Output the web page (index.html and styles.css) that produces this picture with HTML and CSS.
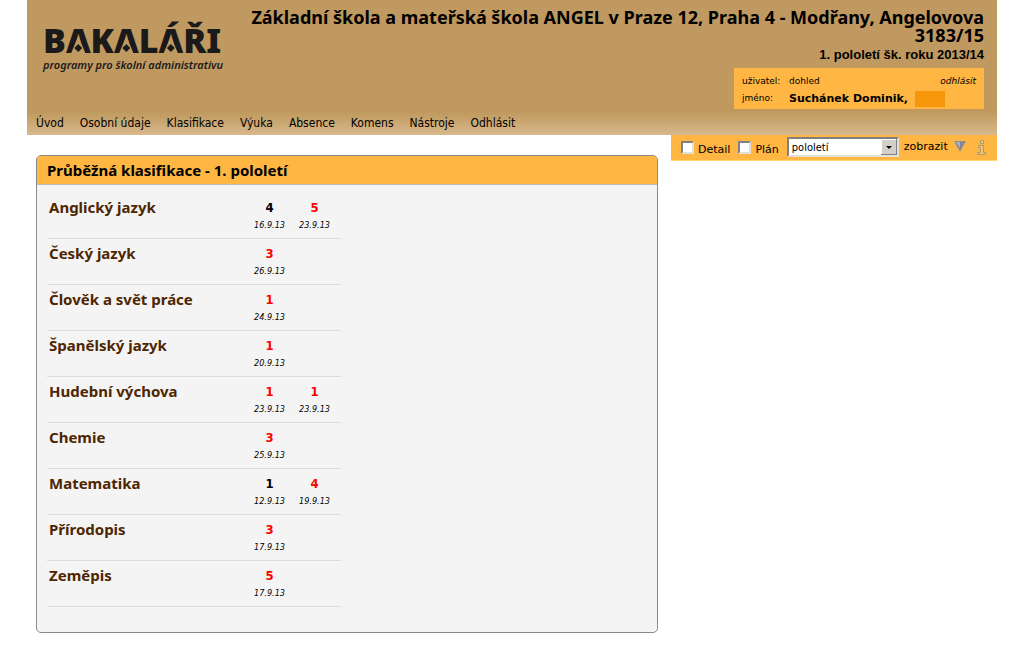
FILE: index.html
```html
<!DOCTYPE html>
<html lang="cs">
<head>
    <meta charset="UTF-8">
    <title>Bakaláři</title>
    <link rel="stylesheet" href="styles.css">
</head>
<body>
<div class="page">
    <header class="top">
        <div class="top-row">
            <div class="logo">
                <div class="logo-name">B<span>A</span>K<span>A</span>L<span>Á</span>ŘI</div>
                <div class="logo-sub">programy pro školní administrativu</div>
            </div>
            <div class="school">
                <h1>Základní škola a mateřská škola ANGEL v Praze 12, Praha 4 - Modřany, Angelovova 3183/15</h1>
                <p class="term">1. pololetí šk. roku 2013/14</p>
                <div class="user">
                    <span>uživatel:</span>
                    <span>dohled</span>
                    <a href="#" class="logout">odhlásit</a>
                    <span>jméno:</span>
                    <span class="user-name">Suchánek Dominik,<i class="mask"></i></span>
                </div>
            </div>
        </div>
        <nav class="menu">
            <a href="#">Úvod</a>
            <a href="#">Osobní údaje</a>
            <a href="#">Klasifikace</a>
            <a href="#">Výuka</a>
            <a href="#">Absence</a>
            <a href="#">Komens</a>
            <a href="#">Nástroje</a>
            <a href="#">Odhlásit</a>
        </nav>
    </header>

    <main class="content">
        <section class="panel">
            <h2>Průběžná klasifikace - 1. pololetí</h2>
            <table class="marks">
                <tr>
                    <th>Anglický jazyk</th>
                    <td><b>4</b><i>16.9.13</i></td>
                    <td class="new"><b>5</b><i>23.9.13</i></td>
                </tr>
                <tr>
                    <th>Český jazyk</th>
                    <td class="new"><b>3</b><i>26.9.13</i></td>
                    <td></td>
                </tr>
                <tr>
                    <th>Člověk a svět práce</th>
                    <td class="new"><b>1</b><i>24.9.13</i></td>
                    <td></td>
                </tr>
                <tr>
                    <th>Španělský jazyk</th>
                    <td class="new"><b>1</b><i>20.9.13</i></td>
                    <td></td>
                </tr>
                <tr>
                    <th>Hudební výchova</th>
                    <td class="new"><b>1</b><i>23.9.13</i></td>
                    <td class="new"><b>1</b><i>23.9.13</i></td>
                </tr>
                <tr>
                    <th>Chemie</th>
                    <td class="new"><b>3</b><i>25.9.13</i></td>
                    <td></td>
                </tr>
                <tr>
                    <th>Matematika</th>
                    <td><b>1</b><i>12.9.13</i></td>
                    <td class="new"><b>4</b><i>19.9.13</i></td>
                </tr>
                <tr>
                    <th>Přírodopis</th>
                    <td class="new"><b>3</b><i>17.9.13</i></td>
                    <td></td>
                </tr>
                <tr>
                    <th>Zeměpis</th>
                    <td class="new"><b>5</b><i>17.9.13</i></td>
                    <td></td>
                </tr>
            </table>
        </section>

        <form class="filter">
            <input type="checkbox" id="detail">
            <label for="detail">Detail</label>
            <input type="checkbox" id="plan">
            <label for="plan">Plán</label>
            <div class="select">
                <select aria-label="období">
                    <option>pololetí</option>
                </select>
                <svg width="16" height="16" viewBox="0 0 16 16">
                    <path d="M0 0h16v16H0z" fill="#808080"/>
                    <path d="M0 0h15v15H0z" fill="#fff"/>
                    <path d="M1 1h14v14H1z" fill="#d4d0c8"/>
                    <path d="M5 7h6l-3 3z" fill="#000"/>
                </svg>
            </div>
            <button type="button" class="show">zobrazit
                <svg width="12" height="10" viewBox="0 0 12 10">
                    <path d="M0 0h12L6.500 10h-1z" fill="#8c8c94"/>
                    <path d="M2 1h8L6 8z" fill="#7e879c"/>
                    <path d="M2 1h4v6z" fill="#a9b1c4"/>
                </svg>
            </button>
            <button type="button" class="info" aria-label="info">
                <svg width="10" height="15" viewBox="0 0 10 15">
                    <path d="M3.500 .5h3v3h-3zM1.500 5.500h5v7h2v2h-8v-2h3v-5h-2z" fill="#fcc662" stroke="#a39a78"/>
                </svg>
            </button>
        </form>
    </main>
</div>
</body>
</html>
```
FILE: styles.css
```css
*{
    box-sizing: border-box;
    padding: 0;
    margin: 0;
}
body{
    background: #fff;
    color: #000;
    font-family: "DejaVu Sans Condensed", Tahoma, sans-serif;
    font-size: 12px;
}
a{
    color: inherit;
    text-decoration: none;
}
button{
    border: 0;
    background: none;
    color: inherit;
}
.page{
    max-width: 970px;
    margin: 0 auto;
}
.top{
    background: linear-gradient(to top, #d8b98c, #be985c 24px, #c09960 28px);
}
.top-row{
    display: flex;
    justify-content: space-between;
    padding: 8px 13px 0 16px;
}
.logo{
    flex: none;
    padding-top: 14px;
    color: #1a1a1a;
    font-family: "Noto Sans", sans-serif;
}
.logo-name{
    font-size: 34px;
    font-weight: 900;
    line-height: 36px;
}
.logo-name span{
    position: relative;
}
/* the letter A has a diamond in place of its crossbar */
.logo-name span::before, .logo-name span::after{
    content: "";
    position: absolute;
    left: 50%;
    transform: translateX(-50%);
}
.logo-name span::before{
    bottom: 9px;
    width: 15px;
    height: 18px;
    background: #c09960;
    clip-path: polygon(50% 0, 100% 100%, 0 100%);
}
.logo-name span::after{
    bottom: 11px;
    width: 8px;
    height: 8px;
    background: #1a1a1a;
    clip-path: polygon(50% 0, 100% 50%, 50% 100%, 0 50%);
}
.logo-sub{
    font-size: 11px;
    font-weight: 600;
    font-style: italic;
    line-height: 14px;
}
.school{
    display: flex;
    flex-direction: column;
    align-items: flex-end;
    text-align: right;
}
.school h1{
    font-family: "Noto Sans", Verdana, sans-serif;
    font-size: 18px;
    line-height: 18px;
}
.term{
    padding-top: 1px;
    font-family: "Liberation Sans", Arial, sans-serif;
    font-size: 13px;
    font-weight: bold;
    line-height: 20px;
}
.user{
    display: grid;
    grid-template-columns: 47px 1fr auto;
    align-items: center;
    width: 250px;
    margin-top: 3px;
    padding: 5px 8px 2px;
    background: #ffb642;
    font-family: "DejaVu Sans", Verdana, sans-serif;
    font-size: 9px;
    line-height: 17px;
    text-align: left;
}
.logout{
    font-style: italic;
}
.user-name{
    display: flex;
    align-items: center;
    grid-column: 2 / 4;
    font-size: 11px;
    font-weight: bold;
}
.mask{
    width: 30px;
    height: 16px;
    margin-left: 7px;
    background: #f7960b;
}
.menu{
    display: flex;
    gap: 16px;
    padding: 5px 9px 3px;
    line-height: 18px;
}
.content{
    display: flex;
    align-items: flex-start;
    gap: 13px;
    padding-left: 9px;
}
.panel{
    flex: 1;
    margin-top: 20px;
    padding-bottom: 25px;
    border: 1px solid #8a8a8a;
    border-radius: 5px;
    background: #f4f4f4;
    overflow: hidden;
}
.panel h2{
    padding: 2px 10px;
    border-bottom: 1px solid #bbb;
    background: #ffb642;
    font-family: "Noto Sans", Tahoma, sans-serif;
    font-size: 15px;
    line-height: 24px;
}
.marks{
    width: 294px;
    margin: 8px 10px 0;
    border-spacing: 0;
    table-layout: fixed;
}
.marks th, .marks td{
    height: 46px;
    border-bottom: 1px solid #dcdcdc;
    vertical-align: top;
}
.marks th{
    width: 200px;
    padding: 4px 2px;
    color: #4d2600;
    font-family: "Noto Sans", Tahoma, sans-serif;
    font-size: 15px;
    line-height: 20px;
    text-align: left;
}
.marks td{
    width: 45px;
    padding-top: 6px;
    text-align: center;
}
.marks td:last-child{
    width: 49px;
    padding-right: 4px;
}
.marks b, .marks i{
    display: block;
}
.marks b{
    font-size: 13px;
    line-height: 18px;
}
.marks i{
    font-size: 9px;
    line-height: 16px;
}
.marks .new b{
    color: #f00;
}
.filter{
    display: flex;
    align-items: center;
    width: 326px;
    padding: 2px 10px 3px;
    border-bottom: 1px solid #ffd873;
    background: #ffb642;
    font-family: "DejaVu Sans", Verdana, sans-serif;
    font-size: 11px;
}
.filter label{
    padding: 5px 8px 0 4px;
}
.filter input, .filter select{
    appearance: none;
    border: 2px solid;
    border-color: #808080 #e4e0d8 #e4e0d8 #808080;
    background: #fff;
}
.filter input{
    width: 13px;
    height: 13px;
}
.select{
    position: relative;
    display: flex;
}
.select svg{
    position: absolute;
    top: 2px;
    right: 2px;
    pointer-events: none;
}
.filter select{
    width: 112px;
    height: 20px;
    padding: 0 3px;
    color: #000;
    font: 11px "DejaVu Sans Condensed", Tahoma, sans-serif;
}
.show{
    display: flex;
    align-items: center;
    gap: 6px;
    padding: 0 5px 2px;
    font: inherit;
}
.info{
    display: flex;
    margin-left: auto;
}
```
